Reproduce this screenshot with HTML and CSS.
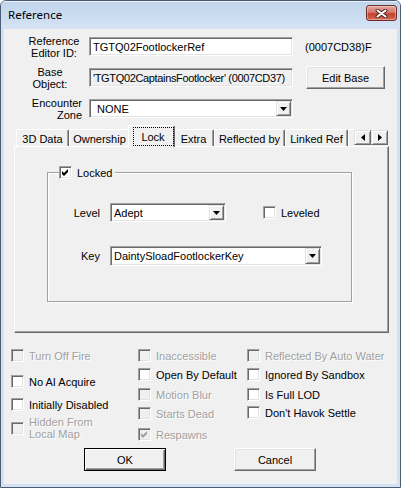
FILE: index.html
```html
<!DOCTYPE html>
<html>
<head>
<meta charset="utf-8">
<title>Reference</title>
<link rel="stylesheet" href="styles.css">
</head>
<body>
<div class="window">
  <div class="titlebar">
    <span class="title">Reference</span>
    <span class="close">
      <svg width="13" height="9" viewBox="0 0 13 9">
        <path d="M2.5 1.5 L10.5 7.5 M10.5 1.5 L2.5 7.5" stroke="#4a1c1c" stroke-width="3.8" stroke-linecap="round" fill="none"/>
        <path d="M2.5 1.5 L10.5 7.5 M10.5 1.5 L2.5 7.5" stroke="#ffffff" stroke-width="2.1" stroke-linecap="round" fill="none"/>
      </svg>
    </span>
  </div>
  <div class="frame">
    <div class="client">
      <div class="row">
        <div class="lbl lbl-c1">Reference<br>Editor ID:</div>
        <div class="edit">TGTQ02FootlockerRef</div>
        <div class="formid">(0007CD38)F</div>
      </div>
      <div class="row">
        <div class="lbl lbl-c2">Base<br>Object:</div>
        <div class="edit ro">'TGTQ02CaptainsFootlocker' (0007CD37)</div>
        <div class="btn editbase">Edit Base</div>
      </div>
      <div class="row">
        <div class="lbl lbl-r">Encounter<br>Zone</div>
        <div class="combo zone"><span>NONE</span><span class="drop"><svg width="7" height="4" viewBox="0 0 7 4"><path d="M0 0H7L3.5 4Z" fill="#000"/></svg></span></div>
      </div>

      <div class="tabstrip">
        <div class="tablist">
          <div class="tab t1">3D Data</div>
          <div class="tab t2">Ownership</div>
          <div class="tab t3 sel"><span class="focus">Lock</span></div>
          <div class="tab t4">Extra</div>
          <div class="tab t5">Reflected by</div>
          <div class="tab t6">Linked Ref</div>
          <div class="tab t7"></div>
        </div>
        <div class="tabscroll">
          <div class="sbtn"><svg width="4" height="7" viewBox="0 0 4 7"><path d="M4 0V7L0 3.5Z" fill="#000"/></svg></div>
          <div class="sbtn"><svg width="4" height="7" viewBox="0 0 4 7"><path d="M0 0V7L4 3.5Z" fill="#000"/></svg></div>
        </div>
      </div>

      <div class="panel">
        <div class="group">
          <div class="legend">
            <span class="cb"><svg class="chk" width="11" height="11" viewBox="0 0 11 11"><path d="M2 4 L4 6 L8 2 L8 5 L4 9 L2 7 Z" fill="#000"/></svg></span>
            <span>Locked</span>
          </div>
          <div class="lrow level">
            <span class="llbl">Level</span>
            <div class="combo adept"><span>Adept</span><span class="drop"><svg width="7" height="4" viewBox="0 0 7 4"><path d="M0 0H7L3.5 4Z" fill="#000"/></svg></span></div>
            <div class="cbitem leveled"><span class="cb"></span><span>Leveled</span></div>
          </div>
          <div class="lrow key">
            <span class="llbl">Key</span>
            <div class="combo keysel"><span>DaintySloadFootlockerKey</span><span class="drop"><svg width="7" height="4" viewBox="0 0 7 4"><path d="M0 0H7L3.5 4Z" fill="#000"/></svg></span></div>
          </div>
        </div>
      </div>

      <div class="flags">
        <div class="col col1">
          <div class="cbitem dis"><span class="cb"></span><span>Turn Off Fire</span></div>
          <div class="cbitem"><span class="cb"></span><span>No AI Acquire</span></div>
          <div class="cbitem"><span class="cb"></span><span>Initially Disabled</span></div>
          <div class="cbitem dis two"><span class="cb"></span><span>Hidden From<br>Local Map</span></div>
        </div>
        <div class="col col2">
          <div class="cbitem dis"><span class="cb"></span><span>Inaccessible</span></div>
          <div class="cbitem"><span class="cb"></span><span>Open By Default</span></div>
          <div class="cbitem dis"><span class="cb"></span><span>Motion Blur</span></div>
          <div class="cbitem dis"><span class="cb"></span><span>Starts Dead</span></div>
          <div class="cbitem dis"><span class="cb"><svg class="chk" width="11" height="11" viewBox="0 0 11 11"><path d="M2 4 L4 6 L8 2 L8 5 L4 9 L2 7 Z" fill="#a0a0a0"/></svg></span><span>Respawns</span></div>
        </div>
        <div class="col col3">
          <div class="cbitem dis"><span class="cb"></span><span>Reflected By Auto Water</span></div>
          <div class="cbitem"><span class="cb"></span><span>Ignored By Sandbox</span></div>
          <div class="cbitem"><span class="cb"></span><span>Is Full LOD</span></div>
          <div class="cbitem"><span class="cb"></span><span>Don't Havok Settle</span></div>
        </div>
      </div>

      <div class="buttons">
        <div class="btn ok">OK</div>
        <div class="btn cancel">Cancel</div>
      </div>
    </div>
  </div>
</div>
</body>
</html>
```

FILE: styles.css
```css
* { box-sizing: border-box; }

html, body {
  margin: 0;
  padding: 0;
  background: #ffffff;
}

body {
  font-family: "Liberation Sans", Arial, sans-serif;
  font-size: 11px;
  color: #000;
}

.window {
  width: 401px;
  height: 488px;
  border: 1px solid #4a5d75;
  border-radius: 6px 6px 0 0;
  background: #d3e1f2;
  display: flex;
  flex-direction: column;
  overflow: hidden;
}

.titlebar {
  height: 28px;
  flex: none;
  display: flex;
  align-items: flex-start;
  justify-content: space-between;
  padding: 0 3px 0 7px;
  background: linear-gradient(#c0d4ec, #d5e3f4);
  box-shadow: inset 0 1px 0 #e8f0fa;
}

.title {
  font-family: "Noto Sans", "Open Sans", sans-serif;
  font-size: 11.5px;
  line-height: 14px;
  margin-top: 7px;
  color: #000;
}

.close {
  width: 31px;
  height: 16px;
  margin-top: 4px;
  border: 1px solid #6e2a24;
  border-radius: 3px;
  background: linear-gradient(#e3a79c 0%, #d5786b 45%, #c2402f 55%, #d36b52 100%);
  box-shadow: inset 0 0 0 1px rgba(255,255,255,0.35);
  display: flex;
  align-items: center;
  justify-content: center;
}

.frame {
  flex: 1;
  padding: 0 3px 3px 3px;
  display: flex;
}

.client {
  width: 393px;
  height: 455px;
  background: #f0f0f0;
  padding-top: 2px;
  display: flex;
  flex-direction: column;
}

/* header rows */
.row {
  height: 31px;
  flex: none;
  display: flex;
  align-items: center;
}

.lbl {
  width: 80px;
  flex: none;
  line-height: 12px;
}

.lbl-c1 { padding-left: 20px; text-align: center; }
.lbl-c2 { padding-left: 12px; text-align: center; }
.lbl-r { text-align: right; padding-right: 2px; }

.edit {
  margin-left: 5px;
  width: 204px;
  height: 19px;
  flex: none;
  background: #fff;
  border: 1px solid;
  border-color: #a0a0a0 #fff #fff #a0a0a0;
  box-shadow: inset 1px 1px 0 #696969, inset -1px -1px 0 #e3e3e3;
  padding-left: 3px;
  display: flex;
  align-items: center;
  white-space: nowrap;
  overflow: hidden;
}

.edit.ro {
  background: #f0f0f0;
  letter-spacing: -0.35px;
}

.formid { margin-left: 12px; }

.btn {
  flex: none;
  display: flex;
  align-items: center;
  justify-content: center;
  background: #f0f0f0;
  border: 1px solid;
  border-color: #fff #696969 #696969 #fff;
  box-shadow: inset -1px -1px 0 #a0a0a0, inset 1px 1px 0 #e3e3e3;
}

.editbase {
  margin-left: 13px;
  width: 79px;
  height: 23px;
}

.combo {
  margin-left: 5px;
  height: 19px;
  flex: none;
  background: #fff;
  border: 1px solid;
  border-color: #a0a0a0 #fff #fff #a0a0a0;
  box-shadow: inset 1px 1px 0 #696969, inset -1px -1px 0 #e3e3e3;
  padding-left: 3px;
  display: flex;
  align-items: center;
  justify-content: space-between;
  white-space: nowrap;
}

.combo.zone { width: 204px; padding-left: 7px; }
.combo.adept { width: 116px; margin-left: 10px; }
.combo.keysel { width: 212px; height: 20px; margin-left: 10px; }

.drop {
  width: 15px;
  height: 15px;
  margin-right: 1px;
  flex: none;
  background: #f0f0f0;
  border: 1px solid;
  border-color: #e3e3e3 #696969 #696969 #e3e3e3;
  box-shadow: inset 1px 1px 0 #fff, inset -1px -1px 0 #a0a0a0;
  display: flex;
  align-items: center;
  justify-content: center;
}

.combo.keysel .drop { height: 16px; }

/* tabs */
.tabstrip {
  height: 22px;
  flex: none;
  display: flex;
  align-items: flex-end;
  padding-left: 12px;
}

.tablist {
  width: 338px;
  height: 23px;
  margin-bottom: -1px;
  display: flex;
  align-items: flex-end;
  overflow: hidden;
  position: relative;
  z-index: 1;
  flex: none;
}

.tab {
  flex: none;
  height: 17px;
  margin-bottom: 1px;
  background: #f0f0f0;
  border-top: 1px solid #fff;
  border-left: 1px solid #fff;
  border-right: 1px solid #696969;
  border-radius: 2px 2px 0 0;
  box-shadow: inset -1px 0 0 #a0a0a0;
  display: flex;
  align-items: center;
  justify-content: center;
  padding-top: 1px;
  white-space: nowrap;
}

.t1 { width: 53px; }
.t2 { width: 61px; }
.t3 { width: 43px; }
.t4 { width: 41px; }
.t5 { width: 71px; }
.t6 { width: 63px; }
.t7 { width: 60px; }

.tab.sel {
  width: 47px;
  height: 22px;
  margin: 0 -2px 0 -2px;
  align-items: flex-start;
  padding: 1px 0 0 3px;
  position: relative;
  z-index: 2;
}

.focus {
  width: 41px;
  height: 19px;
  border: 1px dotted #000;
  display: flex;
  align-items: center;
  justify-content: center;
}

.tabscroll {
  display: flex;
  margin-bottom: 1px;
  flex: none;
}

.sbtn {
  width: 17px;
  height: 15px;
  background: #f0f0f0;
  border: 1px solid;
  border-color: #e3e3e3 #696969 #696969 #e3e3e3;
  box-shadow: inset 1px 1px 0 #fff, inset -1px -1px 0 #a0a0a0;
  display: flex;
  align-items: center;
  justify-content: center;
}

/* tab panel */
.panel {
  margin-left: 10px;
  width: 375px;
  height: 187px;
  flex: none;
  border: 1px solid;
  border-color: #fff #696969 #696969 #fff;
  box-shadow: inset -1px -1px 0 #a0a0a0;
  padding: 25px 0 0 32px;
}

.group {
  width: 305px;
  height: 130px;
  border: 1px solid #a0a0a0;
  box-shadow: inset 1px 1px 0 #fff, 1px 1px 0 #fff;
  display: flex;
  flex-direction: column;
  padding-left: 11px;
}

.legend {
  align-self: flex-start;
  display: flex;
  align-items: center;
  gap: 5px;
  height: 13px;
  margin-top: -7px;
  padding-right: 3px;
  background: #f0f0f0;
}

.lrow {
  display: flex;
  align-items: center;
  margin-left: -11px;
}

.lrow.level { margin-top: 24px; height: 19px; }
.lrow.key { margin-top: 24px; height: 20px; }

.llbl {
  width: 52px;
  flex: none;
  text-align: right;
}

.leveled { margin-left: 37px; }

/* checkboxes */
.cb {
  width: 13px;
  height: 13px;
  flex: none;
  background: #fff;
  border: 1px solid;
  border-color: #a0a0a0 #fff #fff #a0a0a0;
  box-shadow: inset 1px 1px 0 #696969, inset -1px -1px 0 #e3e3e3;
  display: block;
  position: relative;
}

.chk { display: block; }

.cbitem {
  display: flex;
  align-items: center;
  gap: 5px;
  height: 13px;
  white-space: nowrap;
}

.cbitem.dis { color: #a0a0a0; text-shadow: 1px 1px 0 #fff; }
.cbitem.dis .cb { background: #f0f0f0; }

.cbitem.two { height: 24px; line-height: 12px; }

.flags {
  margin-top: 16px;
  height: 99px;
  flex: none;
  display: flex;
  padding-left: 7px;
}

.col { display: flex; flex-direction: column; flex: none; }
.col1 { width: 127px; }
.col2 { width: 109px; }
.col3 { flex: 1; }

.col1 .cbitem:nth-child(1) { margin-bottom: 13px; }
.col1 .cbitem:nth-child(2) { margin-bottom: 10px; }
.col1 .cbitem:nth-child(3) { margin-bottom: 5px; }

.col2 .cbitem:nth-child(1) { margin-bottom: 6px; }
.col2 .cbitem:nth-child(2) { margin-bottom: 7px; }
.col2 .cbitem:nth-child(3) { margin-bottom: 6px; }
.col2 .cbitem:nth-child(4) { margin-bottom: 8px; }

.col3 .cbitem:nth-child(1) { margin-bottom: 6px; }
.col3 .cbitem:nth-child(2) { margin-bottom: 7px; }
.col3 .cbitem:nth-child(3) { margin-bottom: 5px; }

/* dialog buttons */
.buttons {
  display: flex;
  flex: none;
}

.buttons .btn {
  width: 82px;
  height: 23px;
}

.ok {
  margin-left: 80px;
  border-color: #000;
  box-shadow: inset 1px 1px 0 #fff, inset -1px -1px 0 #696969, inset -2px -2px 0 #a0a0a0;
}

.cancel { margin-left: 68px; }
```
